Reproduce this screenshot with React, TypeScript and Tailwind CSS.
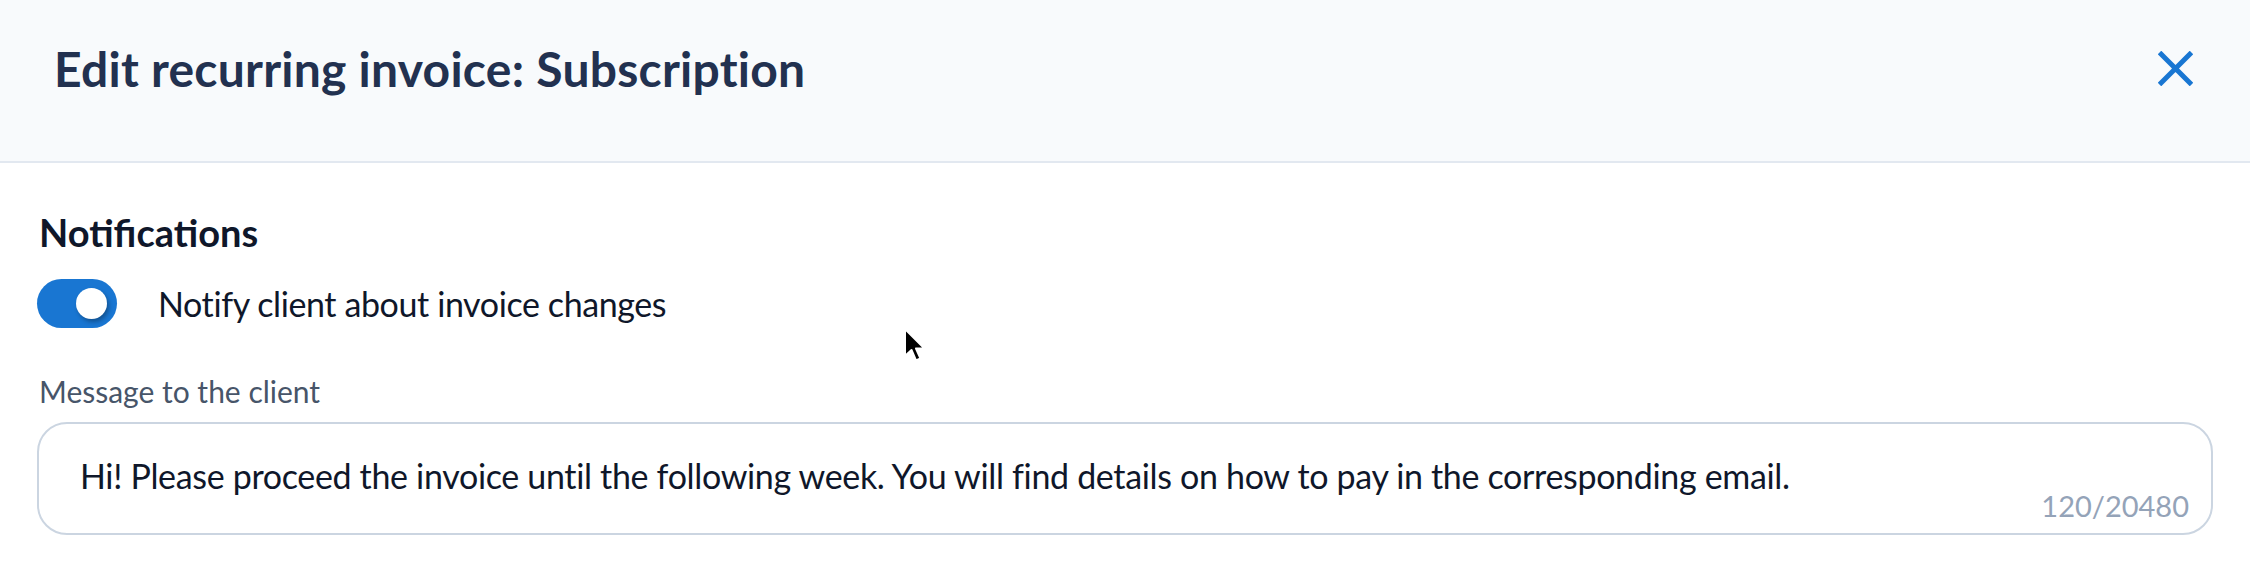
import React, { useState } from 'react';

function Toggle({ on, onChange }: { on: boolean; onChange: (v: boolean) => void }) {
    return (
        <button
            type="button"
            onClick={() => onChange(!on)}
            className={`relative flex h-[49px] w-[80px] shrink-0 items-center rounded-full px-[10px] ${on ? 'bg-[#1976d2] justify-end' : 'bg-slate-300 justify-start'}`}
        >
            <span className="h-[31px] w-[31px] rounded-full bg-white shadow-[2px_3px_4px_rgba(0,0,0,0.3)]" />
        </button>
    );
}

export default function App() {
    const [notify, setNotify] = useState(true);
    const message =
        'Hi! Please proceed the invoice until the following week. You will find details on how to pay in the corresponding email.';

    return (
        <div className="relative h-[564px] w-[2250px] bg-white" style={{ fontFamily: 'Lato, "Noto Sans", sans-serif' }}>
            <header className="flex h-[163px] items-center justify-between border-b-2 border-slate-200 bg-slate-50 pb-[24px] pl-[54px] pr-[57px]">
                <h1 className="text-[48px] font-bold leading-[48px] tracking-[0.25px] text-[#223150]">Edit recurring invoice: Subscription</h1>
                <button type="button" aria-label="Close" className="text-[#1976d2]">
                    <svg width="35" height="35" viewBox="0 0 35 35" fill="none" stroke="currentColor" strokeWidth="5">
                        <path d="M1.5 1.5 L33.5 33.5 M33.5 1.5 L1.5 33.5" />
                    </svg>
                </button>
            </header>

            <main className="px-[37px] pt-[45px]">
                <h2 className="pl-[2px] text-[38px] font-bold leading-[48px] text-[#0f172a]">Notifications</h2>

                <div className="mt-[23px] flex items-center gap-[41px]">
                    <Toggle on={notify} onChange={setNotify} />
                    <span className="text-[34px] leading-[35px] tracking-[-0.4px] text-[#0f172a]">Notify client about invoice changes</span>
                </div>

                <label className="mt-[48px] block pl-[2px] text-[30px] leading-[30px] text-[#475569]">Message to the client</label>

                <div className="relative mt-[16px] flex h-[113px] items-center rounded-[30px] border-2 border-[#cbd5e1] pb-[6px] pl-[41px]">
                    <p className="text-[34px] leading-[35px] tracking-[-0.33px] text-[#0f172a]">{message}</p>
                    <span className="absolute bottom-[13px] right-[22px] text-[29px] leading-[28px] text-[#94a3b8]">
                        {message.length}/20480
                    </span>
                </div>
            </main>

            {/* mouse pointer captured in the screenshot */}
            <svg className="absolute left-[903px] top-[327px]" width="26" height="38" viewBox="0 0 26 38">
                <path d="M2 2 L2 29 L8.5 23 L13 33.5 L17.5 31.5 L13 21.5 L21.5 21.5 Z" fill="#000" stroke="#fff" strokeWidth="2" strokeLinejoin="round" />
            </svg>
        </div>
    );
}
